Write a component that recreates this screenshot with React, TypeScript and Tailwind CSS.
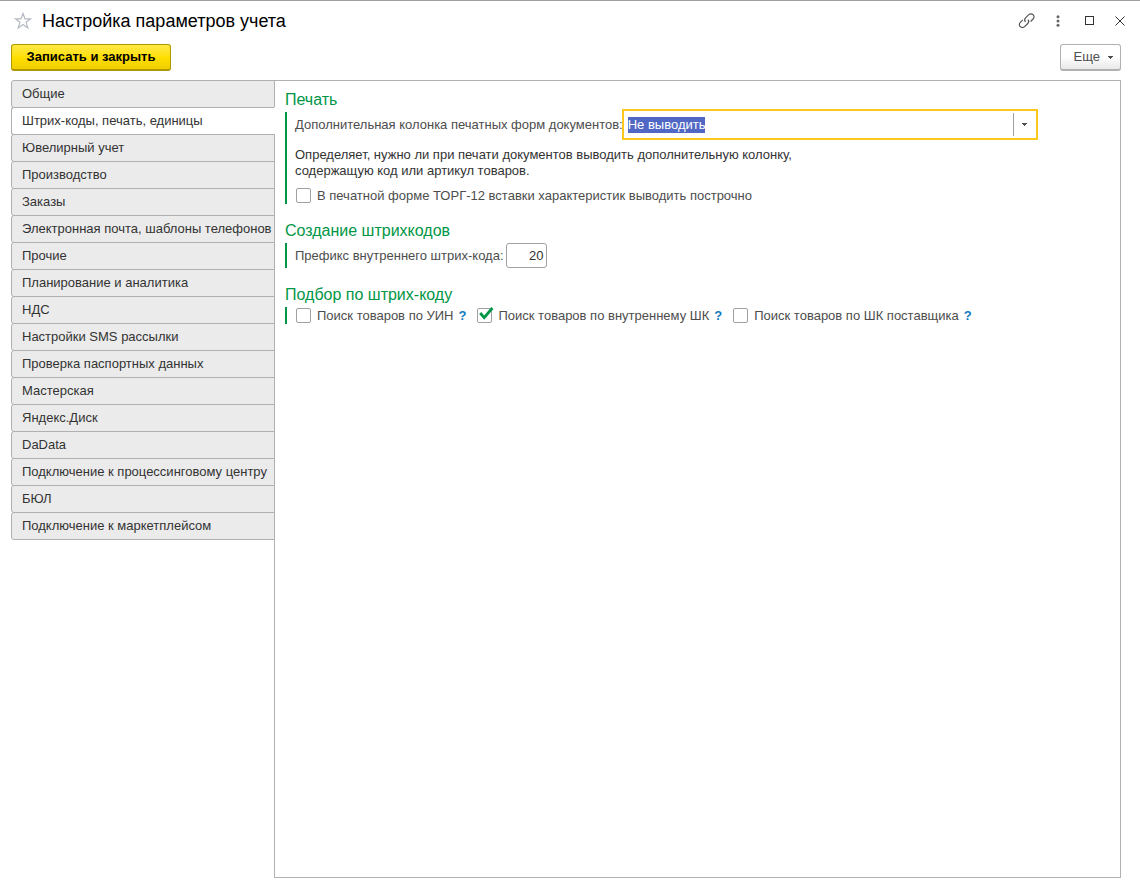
import React, { useEffect, useRef, useState } from 'react';

const SECTIONS = [
  'Общие',
  'Штрих-коды, печать, единицы',
  'Ювелирный учет',
  'Производство',
  'Заказы',
  'Электронная почта, шаблоны телефонов',
  'Прочие',
  'Планирование и аналитика',
  'НДС',
  'Настройки SMS рассылки',
  'Проверка паспортных данных',
  'Мастерская',
  'Яндекс.Диск',
  'DaData',
  'Подключение к процессинговому центру',
  'БЮЛ',
  'Подключение к маркетплейсом',
];

const Caret: React.FC = () => (
  <svg width="5" height="3" viewBox="0 0 5 3" fill="currentColor" shapeRendering="crispEdges" aria-hidden="true">
    <path d="M0 0h5v1H4v1H3v1H2V2H1V1H0z" />
  </svg>
);

const TitleBar: React.FC = () => (
  <header className="flex h-10 items-center justify-between pl-3.5 pr-3">
    <div className="flex items-center gap-2.5">
      <button type="button" aria-label="В избранное" className="text-[#b4bac2]">
        <svg width="18" height="18" viewBox="0 0 18 18" fill="none" stroke="currentColor" strokeWidth="1.2" aria-hidden="true">
          <path d="M9 1.5l2 5.3h5.6l-4.5 3.5 1.7 5.7L9 12.6 4.2 16l1.7-5.7L1.4 6.8H7z" />
        </svg>
      </button>
      <h1 className="text-lg text-black">Настройка параметров учета</h1>
    </div>
    <div className="flex items-center text-[#333]">
      <button type="button" aria-label="Ссылка" className="mr-5 text-[#555]">
        <svg width="18" height="18" viewBox="0 0 18 18" fill="none" stroke="currentColor" strokeWidth="1.2" aria-hidden="true">
          <path d="M7.4 9.8c-1-1.4-.9-2.800.2-3.900l3.200-3.200a3 3 0 0 1 4.300 0 3 3 0 0 1 0 4.300l-2.500 2.500" />
          <path d="M10 7.600c1 1.400.9 2.800-.2 3.900l-3.200 3.200a3 3 0 0 1-4.300 0 3 3 0 0 1 0-4.300l2.500-2.500" />
        </svg>
      </button>
      <button type="button" aria-label="Меню" className="mr-[25px] text-[#666]">
        <svg width="4" height="12" viewBox="0 0 4 12" fill="currentColor" aria-hidden="true">
          <circle cx="2" cy="1.7" r="1.5" />
          <circle cx="2" cy="6" r="1.5" />
          <circle cx="2" cy="10.3" r="1.5" />
        </svg>
      </button>
      <button type="button" aria-label="Развернуть" className="mr-5">
        <svg width="10" height="10" viewBox="0 0 10 10" fill="none" stroke="currentColor" shapeRendering="crispEdges" aria-hidden="true">
          <path d="M.5.5h8v8h-8z" />
        </svg>
      </button>
      <button type="button" aria-label="Закрыть" className="mr-[3px]">
        <svg width="10" height="10" viewBox="0 0 10 10" fill="none" stroke="currentColor" aria-hidden="true">
          <path d="M.5.5l9 9M9.5.5l-9 9" />
        </svg>
      </button>
    </div>
  </header>
);

interface GroupProps {
  title: string;
  children: React.ReactNode;
}

const Group: React.FC<GroupProps> = ({ title, children }) => (
  <section>
    <h2 className="mb-0.5 pt-px text-base/5 text-[#009646]">{title}</h2>
    <div className="border-l-2 border-[#009646] pl-2">{children}</div>
  </section>
);

interface CheckProps {
  label: string;
  help?: boolean;
  defaultChecked?: boolean;
}

const Check: React.FC<CheckProps> = ({ label, help, defaultChecked }) => (
  <div className="flex h-[17px] items-center">
    <label className="flex items-center gap-1.5">
      <span className="relative ml-px size-[15px]">
        <input
          type="checkbox"
          defaultChecked={defaultChecked}
          className="peer block size-[15px] appearance-none rounded-[2px] border border-[#a0a0a0] bg-white"
        />
        <svg
          className="pointer-events-none absolute -top-px left-0.5 hidden text-[#009646] peer-checked:block"
          width="15"
          height="13"
          viewBox="0 0 15 13"
          fill="none"
          stroke="currentColor"
          strokeWidth="2.8"
          aria-hidden="true"
        >
          <path d="M1.2 6l4 4.6L13.4 1" />
        </svg>
      </span>
      {label}
    </label>
    {help && (
      <button type="button" aria-label={`Справка: ${label}`} className="ml-[5px] font-bold text-[#0f7ac0]">
        ?
      </button>
    )}
  </div>
);

const BarcodeSettings: React.FC = () => {
  const columnRef = useRef<HTMLInputElement>(null);

  useEffect(() => {
    columnRef.current?.focus();
    columnRef.current?.select();
  }, []);

  return (
    <div className="flex flex-col gap-4">
      <Group title="Печать">
        <div className="flex items-center gap-0.5">
          <label htmlFor="extra-column">Дополнительная колонка печатных форм документов:</label>
          <div className="flex h-[25px] w-[410px] items-center bg-white outline-2 outline-offset-1 outline-[#fcc81e]">
            <input
              id="extra-column"
              ref={columnRef}
              defaultValue="Не выводить"
              className="h-4 min-w-0 flex-1 pl-[3px] leading-4 text-[#333] outline-none selection:bg-[#5068c4] selection:text-white"
            />
            <button
              type="button"
              aria-label="Выбрать"
              className="flex h-[23px] w-[22px] items-center justify-center border-l border-[#a0a0a0]"
            >
              <Caret />
            </button>
          </div>
        </div>
        <p className="mt-2.5 max-w-[510px] leading-4 text-[#333]">
          Определяет, нужно ли при печати документов выводить дополнительную колонку, содержащую код или артикул товаров.
        </p>
        <div className="mt-2">
          <Check label="В печатной форме ТОРГ-12 вставки характеристик выводить построчно" />
        </div>
      </Group>
      <Group title="Создание штрихкодов">
        <div className="flex items-center gap-0.5">
          <label htmlFor="prefix">Префикс внутреннего штрих-кода:</label>
          <input
            id="prefix"
            defaultValue="20"
            className="h-[25px] w-[41px] rounded-[3px] border border-[#a0a0a0] px-0.5 text-right text-[#333]"
          />
        </div>
      </Group>
      <Group title="Подбор по штрих-коду">
        <div className="flex flex-wrap gap-x-2.5">
          <Check label="Поиск товаров по УИН" help />
          <Check label="Поиск товаров по внутреннему ШК" help defaultChecked />
          <Check label="Поиск товаров по ШК поставщика" help />
        </div>
      </Group>
    </div>
  );
};

const App: React.FC = () => {
  const [active, setActive] = useState(1);

  return (
    <div className="flex min-h-screen flex-col border-t border-[#a0a0a0] bg-white pb-3 font-['Liberation_Sans',Arial,sans-serif] text-[13px] text-[#4d4d4d]">
      <TitleBar />
      <div className="mt-[3px] flex justify-between pl-[11px] pr-[19px]">
        <button
          type="button"
          className="h-[27px] min-w-40 rounded-[3px] border border-b-2 border-[#b09900] bg-linear-to-b from-[#ffe840] via-[#ffe000] to-[#f0ce00] px-3 font-bold text-black"
        >
          Записать и закрыть
        </button>
        <button
          type="button"
          className="flex h-[27px] items-center gap-2 rounded-[3px] border border-b-2 border-[#b0b0b0] bg-linear-to-b from-white from-50% to-[#e8e8e8] pl-[13px] pr-[7px]"
        >
          Еще
          <Caret />
        </button>
      </div>
      <main className="mt-[9px] flex flex-1 pl-[11px] pr-[19px]">
        <div role="tablist" aria-orientation="vertical" className="z-10 -mr-px flex w-[264px] shrink-0 flex-col self-start">
          {SECTIONS.map((name, i) => (
            <button
              key={name}
              type="button"
              role="tab"
              aria-selected={i === active}
              onClick={() => setActive(i)}
              className={`-mb-px h-7 rounded-l-[3px] border border-[#b0b0b0] pl-2.5 text-left whitespace-nowrap text-[#333] ${
                i === active ? 'border-r-white bg-white' : 'bg-[#ebebeb]'
              }`}
            >
              {name}
            </button>
          ))}
        </div>
        <div role="tabpanel" aria-label={SECTIONS[active]} className="min-w-0 flex-1 border border-[#b0b0b0] px-2.5 py-2">
          <BarcodeSettings />
        </div>
      </main>
    </div>
  );
};

export default App;
